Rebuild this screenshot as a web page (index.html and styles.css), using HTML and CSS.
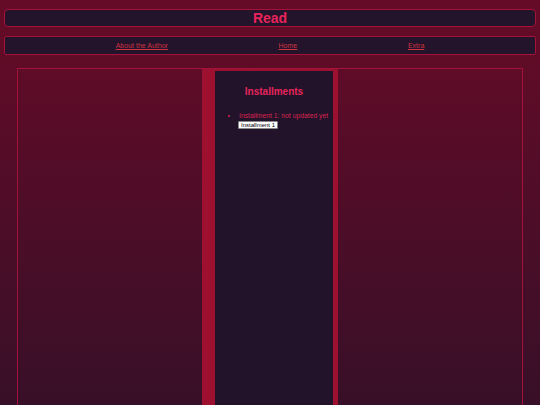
FILE: index.html
```html
<!DOCTYPE html>
<html>
<head>
<meta charset="utf-8">
<link rel="stylesheet" href="styles.css">
</head>
<body>
<header class="title-bar"><h1 class="title">Read</h1></header>
<nav class="nav-bar">
  <a class="nav-link" href="#">About the Author</a>
  <a class="nav-link" href="#">Home</a>
  <a class="nav-link" href="#">Extra</a>
</nav>
<main class="layout">
  <section class="side"></section>
  <section class="middle">
    <div class="panel">
      <h2 class="panel-title">Installments</h2>
      <ul class="list">
        <li class="item">Installment 1: not updated yet<br><button class="btn">Installment 1</button></li>
      </ul>
    </div>
  </section>
  <section class="side"></section>
</main>
</body>
</html>
```
FILE: styles.css
```css
html, body {
  margin: 0;
  height: 100%;
}
body {
  background: linear-gradient(#660b27, #380f28);
  font-family: "Liberation Sans", Arial, sans-serif;
  overflow: hidden;
}
.title-bar {
  margin: 9px 4px 0;
  height: 18px;
  box-sizing: border-box;
  border: 1px solid #a3123a;
  border-radius: 4px;
  background: #23132b;
  display: flex;
  align-items: center;
  justify-content: center;
}
.title {
  margin: 0;
  font-size: 14px;
  line-height: 16px;
  font-weight: bold;
  color: #e8245a;
}
.nav-bar {
  margin: 9px 4px 0;
  height: 19px;
  box-sizing: border-box;
  border: 1px solid #a3123a;
  border-radius: 2px;
  background: #23132b;
  display: flex;
  align-items: center;
  justify-content: space-evenly;
}
.nav-link {
  font-size: 7px;
  color: #cc3442;
  text-decoration: underline;
}
.layout {
  margin: 13px 17px 0;
  border: 1px solid #a3123a;
  display: grid;
  grid-template-columns: 184px 136px 184px;
  height: 340px;
}
.middle {
  background: #9e1030;
  padding: 2px 5px 0 13px;
}
.panel {
  background: #22132b;
  height: 100%;
  padding-top: 15px;
}
.panel-title {
  margin: 0;
  text-align: center;
  font-size: 10px;
  line-height: 12px;
  font-weight: bold;
  color: #e8245a;
}
.list {
  margin: 14px 0 0;
  padding-left: 24px;
  color: #d8244e;
  font-size: 6.8px;
  line-height: 8px;
  white-space: nowrap;
}
.item::marker {
  font-size: 7px;
}
.btn {
  margin: 1px 0 0 -1px;
  font-family: "Liberation Sans", Arial, sans-serif;
  font-size: 6px;
  line-height: 6px;
  padding: 0 2px;
  height: 8px;
  background: #fff;
  border: 1px solid #888;
  border-radius: 1px;
  color: #000;
}
```
